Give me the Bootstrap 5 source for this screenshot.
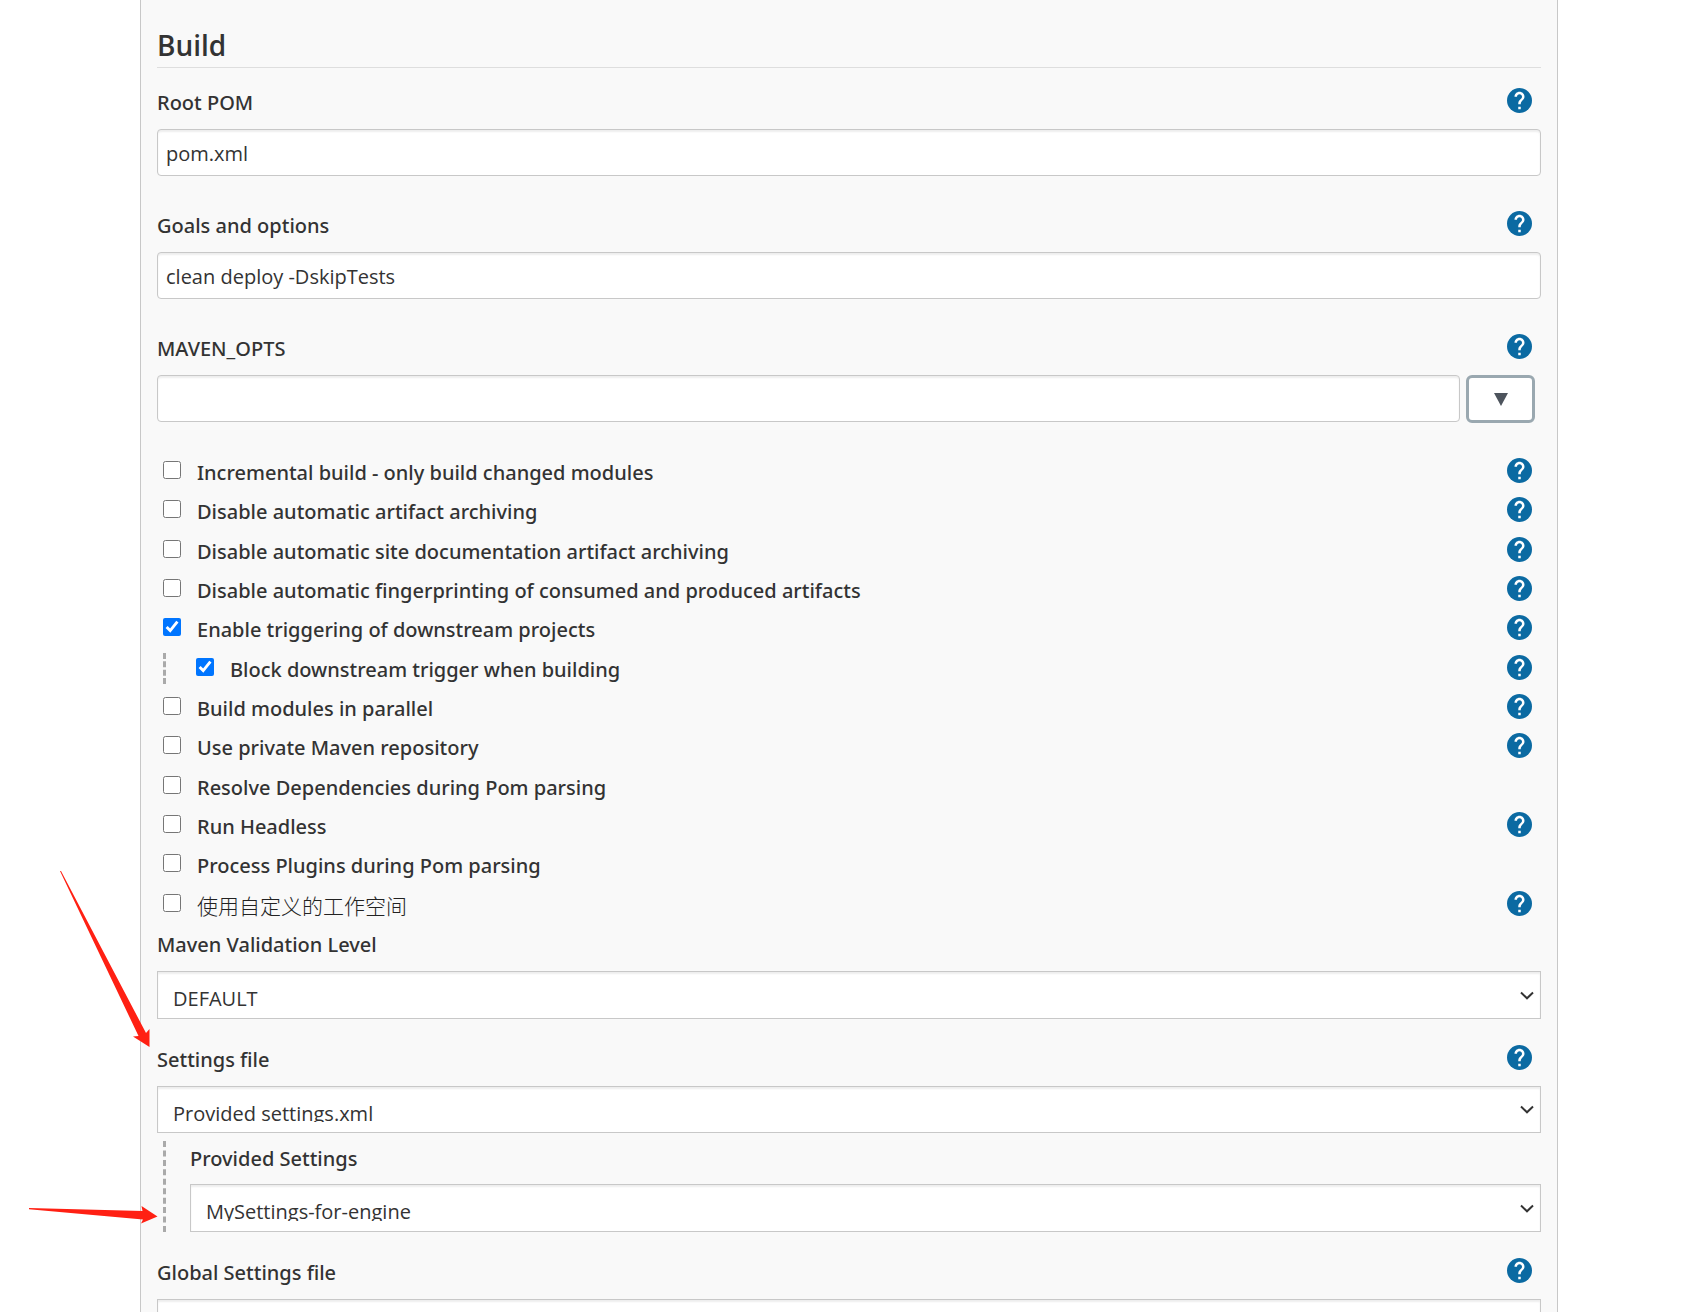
<!DOCTYPE html>
<html lang="en">
<head>
<meta charset="utf-8">
<meta name="viewport" content="width=device-width, initial-scale=1">
<title>Build configuration</title>
<link href="https://cdn.jsdelivr.net/npm/bootstrap@5.3.0/dist/css/bootstrap.min.css" rel="stylesheet">
<style>
  body { font-family: "Open Sans", "Noto Sans", "Noto Sans CJK SC", sans-serif; font-size: 20px; line-height: 28px; color: #333; background: #fff; }
  .page-wrap { padding: 0 147px 0 140px; }
  .config-panel { background: #f9f9f9; border: 1px solid #c8c8c8; border-width: 0 1px; padding: 27px 16px 0; }
  .section-title { font-size: 28px; line-height: 36px; font-weight: 600; padding-bottom: 4px; margin-bottom: 14px; border-bottom: 1px solid #dedede; }
  .label-row, .option-row { display: flex; align-items: center; height: 39px; padding-right: 9px; }
  .label-row label, .option-row label { font-family: "Noto Sans", "Noto Sans CJK SC", sans-serif; font-weight: 500; padding-top: 2px; }
  .option-row .zh-label { font-size: 21px; font-weight: 300; color: #222; }
  .label-row { margin-bottom: 8px; }
  .text-group { margin-bottom: 29px; }
  .select-group { margin-bottom: 20px; }
  .form-control, .form-select { font-size: 20px; line-height: 28px; color: #333; border: 1px solid #c8c8c8; background-color: #fff; box-shadow: inset 0 2px 2px rgba(0,0,0,.07); }
  .form-control { height: 47px; border-radius: 4px; padding: 9px 8px 7px; }
  .form-select { height: 48px; border-radius: 0; line-height: 26px; padding: 14px 32px 10px 15px;
    background-image: url("data:image/svg+xml,%3Csvg xmlns='http://www.w3.org/2000/svg' viewBox='0 0 14 9'%3E%3Cpath d='M1 1.5 7 7.3 13 1.5' fill='none' stroke='%23333' stroke-width='2'/%3E%3C/svg%3E");
    background-size: 14px 9px; background-position: right 6px center; }
  .expand-btn { width: 69px; height: 48px; margin: 0 6px; padding: 0; border: 3px solid #9aa8b0; border-radius: 6px; background: #fff; display: flex; align-items: center; justify-content: center; }
  .help-link { width: 25px; height: 25px; margin: 0 0 2px auto; display: block; }
  .help-link svg { display: block; }
  .option-row { padding-left: 6px; }
  .option-row input { width: 18px; height: 18px; margin: 0 16px 4px 0; flex: none; accent-color: #0075ff; }
  .option-row:nth-child(3n) { margin-top: 1px; }
  .nested-mark { align-self: center; width: 33px; height: 31px; border-left: 3px dashed #aaa; }
  .nested-block { margin: 8px 0 20px 6px; border-left: 3px dashed #aaa; padding-left: 24px; }
  .nested-block .label-row { height: 33px; margin-bottom: 10px; }
  .select-tight { height: 47px; }
  .arrow-layer { left: 0; top: 0; pointer-events: none; }
</style>
<script src="https://cdn.jsdelivr.net/npm/bootstrap@5.3.0/dist/js/bootstrap.bundle.min.js"></script>
</head>
<body>
<svg width="0" height="0" class="position-absolute" aria-hidden="true">
  <symbol id="help" viewBox="2 2 20 20"><circle cx="12" cy="12" r="10" fill="#0b6aa2"/><path fill="#fff" d="M13 19h-2v-2h2v2zm2.070-7.750-.9.920C13.450 12.900 13 13.500 13 15h-2v-.5c0-1.100.45-2.100 1.170-2.830l1.240-1.260c.37-.36.59-.86.59-1.410 0-1.100-.9-2-2-2s-2 .9-2 2H8c0-2.210 1.790-4 4-4s4 1.790 4 4c0 .88-.36 1.680-.93 2.250z"/></symbol>
</svg>
<div class="page-wrap position-relative vh-100 overflow-hidden">
  <main class="config-panel min-vh-100">
    <h2 class="section-title mt-0">Build</h2>

    <div class="text-group">
      <div class="label-row"><label for="pom">Root POM</label><a class="help-link" href="#" aria-label="Help"><svg width="25" height="25"><use href="#help"/></svg></a></div>
      <input class="form-control" id="pom" type="text" value="pom.xml">
    </div>
    <div class="text-group">
      <div class="label-row"><label for="goals">Goals and options</label><a class="help-link" href="#" aria-label="Help"><svg width="25" height="25"><use href="#help"/></svg></a></div>
      <input class="form-control" id="goals" type="text" value="clean deploy -DskipTests">
    </div>
    <div class="text-group">
      <div class="label-row mb-2"><label for="opts">MAVEN_OPTS</label><a class="help-link" href="#" aria-label="Help"><svg width="25" height="25"><use href="#help"/></svg></a></div>
      <div class="d-flex">
        <input class="form-control flex-fill" id="opts" type="text">
        <button class="expand-btn flex-shrink-0" type="button" aria-label="Expand"><svg width="14" height="13"><path d="M0 0h14L7 13z" fill="#4d545d"/></svg></button>
      </div>
    </div>

    <div class="option-list">
      <div class="option-row"><input type="checkbox" id="c1"><label for="c1">Incremental build - only build changed modules</label><a class="help-link" href="#" aria-label="Help"><svg width="25" height="25"><use href="#help"/></svg></a></div>
      <div class="option-row"><input type="checkbox" id="c2"><label for="c2">Disable automatic artifact archiving</label><a class="help-link" href="#" aria-label="Help"><svg width="25" height="25"><use href="#help"/></svg></a></div>
      <div class="option-row"><input type="checkbox" id="c3"><label for="c3">Disable automatic site documentation artifact archiving</label><a class="help-link" href="#" aria-label="Help"><svg width="25" height="25"><use href="#help"/></svg></a></div>
      <div class="option-row"><input type="checkbox" id="c4"><label for="c4">Disable automatic fingerprinting of consumed and produced artifacts</label><a class="help-link" href="#" aria-label="Help"><svg width="25" height="25"><use href="#help"/></svg></a></div>
      <div class="option-row"><input type="checkbox" id="c5" checked><label for="c5">Enable triggering of downstream projects</label><a class="help-link" href="#" aria-label="Help"><svg width="25" height="25"><use href="#help"/></svg></a></div>
      <div class="option-row"><span class="nested-mark"></span><input type="checkbox" id="c6" checked><label for="c6">Block downstream trigger when building</label><a class="help-link" href="#" aria-label="Help"><svg width="25" height="25"><use href="#help"/></svg></a></div>
      <div class="option-row"><input type="checkbox" id="c7"><label for="c7">Build modules in parallel</label><a class="help-link" href="#" aria-label="Help"><svg width="25" height="25"><use href="#help"/></svg></a></div>
      <div class="option-row"><input type="checkbox" id="c8"><label for="c8">Use private Maven repository</label><a class="help-link" href="#" aria-label="Help"><svg width="25" height="25"><use href="#help"/></svg></a></div>
      <div class="option-row"><input type="checkbox" id="c9"><label for="c9">Resolve Dependencies during Pom parsing</label></div>
      <div class="option-row"><input type="checkbox" id="c10"><label for="c10">Run Headless</label><a class="help-link" href="#" aria-label="Help"><svg width="25" height="25"><use href="#help"/></svg></a></div>
      <div class="option-row"><input type="checkbox" id="c11"><label for="c11">Process Plugins during Pom parsing</label></div>
      <div class="option-row"><input type="checkbox" id="c12"><label for="c12" class="zh-label" lang="zh">使用自定义的工作空间</label><a class="help-link" href="#" aria-label="Help"><svg width="25" height="25"><use href="#help"/></svg></a></div>
    </div>

    <div class="select-group">
      <div class="label-row"><label for="level">Maven Validation Level</label></div>
      <select class="form-select" id="level"><option>DEFAULT</option></select>
    </div>
    <div class="label-row"><label for="settings">Settings file</label><a class="help-link" href="#" aria-label="Help"><svg width="25" height="25"><use href="#help"/></svg></a></div>
    <select class="form-select select-tight" id="settings"><option>Provided settings.xml</option></select>
    <div class="nested-block">
      <div class="label-row"><label for="provided">Provided Settings</label></div>
      <select class="form-select" id="provided"><option>MySettings-for-engine</option></select>
    </div>
    <div class="label-row"><label for="global">Global Settings file</label><a class="help-link" href="#" aria-label="Help"><svg width="25" height="25"><use href="#help"/></svg></a></div>
    <select class="form-select" id="global"><option></option></select>
  </main>
  <svg class="arrow-layer position-absolute" width="170" height="1240" fill="#ff2013" aria-hidden="true">
    <path d="M60 871 61 871 146 1033 149.500 1029 149.500 1047 133 1036.500 138.500 1036z"/>
    <path d="M29 1208 142.500 1211 141.500 1206 157.500 1216.600 141 1223.500 143 1219.500 29 1209.300z"/>
  </svg>
</div>
</body>
</html>
